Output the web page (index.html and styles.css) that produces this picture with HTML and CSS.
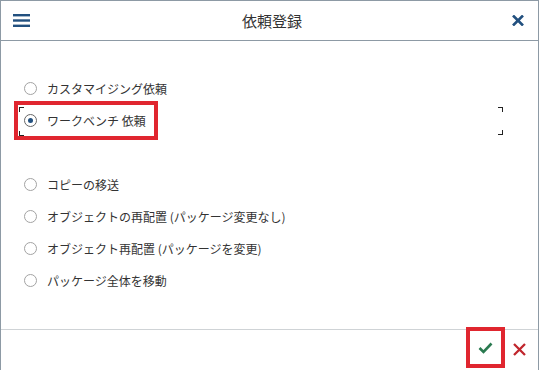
FILE: index.html
```html
<!DOCTYPE html>
<html lang="ja">
<head>
    <meta charset="UTF-8">
    <title>依頼登録</title>
    <link rel="stylesheet" href="styles.css">
</head>
<body>

    <div class="dialog">
        <div class="header">
            <svg class="menu" width="17" height="13" viewBox="0 0 17 13">
                <rect x="0" y="0" width="17" height="2.4" fill="#22507f"/>
                <rect x="0" y="5.3" width="17" height="2.4" fill="#22507f"/>
                <rect x="0" y="10.6" width="17" height="2.4" fill="#22507f"/>
            </svg>
            <div class="title">依頼登録</div>
            <svg class="close" width="12" height="11" viewBox="0 0 12 11">
                <path d="M1 0.5 L11 10.5 M11 0.5 L1 10.5" stroke="#22507f" stroke-width="2.6"/>
            </svg>
        </div>

        <div class="content">
            <div class="option">
                <span class="radio"></span>
                <span class="label">カスタマイジング依頼</span>
            </div>
            <div class="option selected">
                <span class="radio"></span>
                <span class="label">ワークベンチ 依頼</span>
                <span class="corner tl"></span>
                <span class="corner bl"></span>
                <span class="corner tr"></span>
                <span class="corner br"></span>
                <span class="mark"></span>
            </div>
            <div class="option">
                <span class="radio"></span>
                <span class="label">コピーの移送</span>
            </div>
            <div class="option">
                <span class="radio"></span>
                <span class="label">オブジェクトの再配置 (パッケージ変更なし)</span>
            </div>
            <div class="option">
                <span class="radio"></span>
                <span class="label">オブジェクト再配置 (パッケージを変更)</span>
            </div>
            <div class="option">
                <span class="radio"></span>
                <span class="label">パッケージ全体を移動</span>
            </div>
        </div>

        <div class="footer">
            <button class="ok">
                <svg width="15" height="12" viewBox="0 0 15 12">
                    <path d="M1.5 6 L5.5 10 L13.5 1.5" stroke="#2a7a50" stroke-width="2.6" fill="none"/>
                </svg>
            </button>
            <button class="cancel">
                <svg width="13" height="13" viewBox="0 0 13 13">
                    <path d="M1 1 L12 12 M12 1 L1 12" stroke="#c0262d" stroke-width="2.3"/>
                </svg>
            </button>
        </div>
    </div>

</body>
</html>
```

FILE: styles.css
```css
body {
    margin: 0;
    font-family: "Noto Sans CJK JP", "Noto Sans", sans-serif;
    color: #333;
    background: #fff;
}

.dialog {
    width: 539px;
    height: 370px;
    box-sizing: border-box;
    border: 1px solid #8d9aa5;
    border-bottom: none;
    display: flex;
    flex-direction: column;
}

.header {
    height: 39px;
    border-bottom: 1px solid #8d9aa5;
    display: flex;
    align-items: center;
    padding: 0 14px 0 12px;
}

.menu {
    display: block;
}

.title {
    flex: 1;
    text-align: center;
    font-size: 15px;
    color: #333;
    padding-left: 2px;
}

.close {
    display: block;
}

.content {
    flex: 1;
    padding-top: 31px;
}

.option {
    position: relative;
    height: 32px;
    display: flex;
    align-items: center;
    padding-left: 23px;
}

.option.selected {
    margin-bottom: 32px;
}

.radio {
    width: 11px;
    height: 11px;
    border: 1px solid #a3a3a3;
    border-radius: 50%;
    position: relative;
    flex-shrink: 0;
}

.selected .radio {
    border-color: #666;
}

.selected .radio::after {
    content: "";
    position: absolute;
    left: 3px;
    top: 3px;
    width: 5px;
    height: 5px;
    border-radius: 50%;
    background: #22507f;
}

.label {
    margin-left: 10px;
    font-size: 12px;
    color: #333;
    white-space: nowrap;
}

/* focus rectangle corners */
.corner {
    position: absolute;
    width: 4px;
    height: 4px;
    border-color: #222;
    border-style: solid;
    border-width: 0;
}

.corner.tl { left: 18px; top: 3px; border-top-width: 1px; border-left-width: 1px; }
.corner.bl { left: 18px; top: 27px; border-bottom-width: 1px; border-left-width: 1px; }
.corner.tr { left: 497px; top: 3px; border-top-width: 1px; border-right-width: 1px; }
.corner.br { left: 497px; top: 26px; border-bottom-width: 1px; border-right-width: 1px; }

/* red highlight box */
.mark {
    position: absolute;
    left: 13px;
    top: -3px;
    width: 136px;
    height: 31px;
    border: 4px solid #e0262f;
}

.footer {
    height: 40px;
    border-top: 1px solid #cfd3d6;
    display: flex;
    justify-content: flex-end;
    align-items: flex-start;
    padding-right: 12px;
}

button {
    background: none;
    border: none;
    padding: 0;
    cursor: pointer;
    display: flex;
    align-items: center;
    justify-content: center;
}

.ok {
    box-sizing: border-box;
    width: 39px;
    height: 41px;
    border: 4px solid #e0262f;
    margin-top: -3px;
}

.cancel {
    width: 14px;
    height: 30px;
    margin-top: 4px;
    margin-left: 7px;
}
```
